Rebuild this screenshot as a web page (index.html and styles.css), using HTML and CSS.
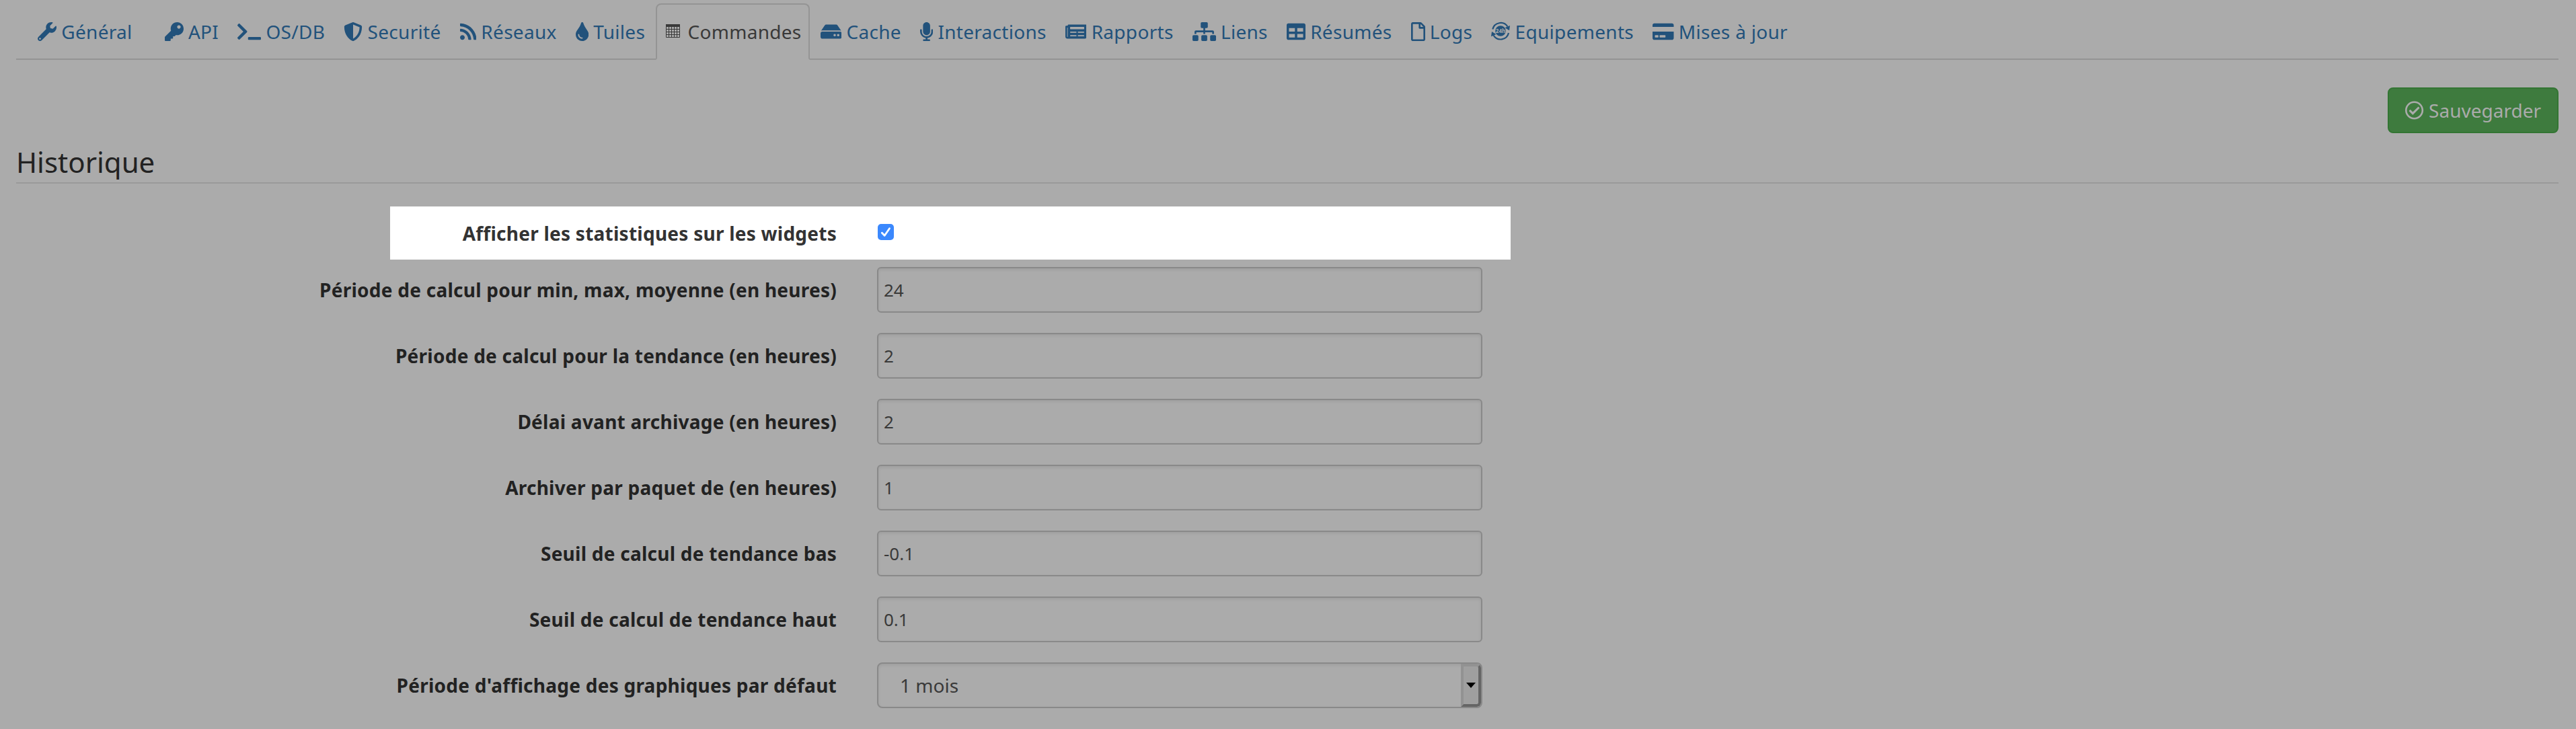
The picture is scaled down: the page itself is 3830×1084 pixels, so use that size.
FILE: index.html
```html
<!DOCTYPE html>
<html lang="fr">
<head>
<meta charset="utf-8">
<title>Configuration</title>
<link rel="stylesheet" href="styles.css">
</head>
<body>
<nav class="tabs">
  <a class="tab tab-first"><svg class="icon" viewBox="0 0 512 512"><path d="M507.73 109.1c-2.24-9.03-13.54-12.09-20.12-5.51l-74.36 74.36-67.88-11.31-11.31-67.88 74.36-74.36c6.62-6.62 3.43-17.9-5.66-20.16-47.38-11.74-99.55.91-136.58 37.93-39.64 39.64-50.55 97.1-34.05 147.2L18.74 402.76c-24.99 24.99-24.99 65.51 0 90.5 24.99 24.99 65.51 24.99 90.5 0l213.21-213.21c50.12 16.71 107.47 5.68 147.37-34.22 37.07-37.07 49.7-89.32 37.91-136.73zM64 472c-13.25 0-24-10.75-24-24 0-13.26 10.75-24 24-24s24 10.74 24 24c0 13.25-10.75 24-24 24z"/></svg>Général</a>
  <a class="tab"><svg class="icon" viewBox="0 0 512 512"><path d="M512 176.001C512 273.203 433.202 352 336 352c-11.22 0-22.19-1.062-32.827-3.069l-24.012 27.014A23.999 23.999 0 0 1 261.223 384H224v40c0 13.255-10.745 24-24 24h-40v40c0 13.255-10.745 24-24 24H24c-13.255 0-24-10.745-24-24v-78.059c0-6.365 2.529-12.47 7.029-16.971l161.802-161.802C163.108 213.814 160 195.271 160 176 160 78.798 238.797.001 335.999 0 433.488-.001 512 78.511 512 176.001zM336 128c0 26.51 21.49 48 48 48s48-21.49 48-48-21.49-48-48-48-48 21.49-48 48z"/></svg>API</a>
  <a class="tab"><svg class="icon" viewBox="0 0 640 512"><path d="M257.981 272.971L63.638 467.314c-9.373 9.373-24.569 9.373-33.941 0L7.029 444.647c-9.357-9.357-9.375-24.522-.04-33.901L161.011 256 6.99 101.255c-9.335-9.379-9.317-24.544.04-33.901l22.667-22.667c9.373-9.373 24.569-9.373 33.941 0L257.981 239.03c9.373 9.372 9.373 24.568 0 33.941zM640 456v-32c0-13.255-10.745-24-24-24H312c-13.255 0-24 10.745-24 24v32c0 13.255 10.745 24 24 24h304c13.255 0 24-10.745 24-24z"/></svg>OS/DB</a>
  <a class="tab"><svg class="icon" viewBox="0 0 512 512"><path d="M466.5 83.7l-192-80a48.15 48.15 0 0 0-36.9 0l-192 80C27.7 91.1 16 108.6 16 128c0 198.5 114.5 335.7 221.5 380.3 11.8 4.9 25.1 4.9 36.9 0C360.1 472.6 496 349.3 496 128c0-19.4-11.7-36.9-29.5-44.3zM256.1 446.3l-.1-381 175.9 73.3c-3.3 151.4-82.1 261.1-175.8 307.7z"/></svg>Securité</a>
  <a class="tab"><svg class="icon" viewBox="0 0 448 512"><path d="M128.081 415.959c0 35.369-28.672 64.041-64.041 64.041S0 451.328 0 415.959s28.672-64.041 64.041-64.041 64.04 28.673 64.04 64.041zm175.66 47.25c-8.354-154.6-132.185-278.587-286.95-286.95C7.656 175.765 0 183.105 0 192.253v48.069c0 8.415 6.49 15.472 14.887 16.018 111.832 7.284 201.473 96.702 208.772 208.772.547 8.397 7.604 14.887 16.018 14.887h48.069c9.149.001 16.489-7.655 15.995-16.79zm144.249.288C439.596 229.677 251.465 40.445 16.503 32.01 7.473 31.686 0 38.981 0 48.016v48.068c0 8.625 6.835 15.645 15.453 15.999 191.179 7.839 344.627 161.316 352.465 352.465.353 8.618 7.373 15.453 15.999 15.453h48.068c9.034-.001 16.329-7.474 16.005-16.504z"/></svg>Réseaux</a>
  <a class="tab"><svg class="icon" viewBox="0 0 352 512"><path d="M205.22 22.09c-7.94-28.78-49.44-30.12-58.44 0C100.01 179.85 0 222.72 0 333.91 0 432.35 78.72 512 176 512s176-79.65 176-178.09c0-111.75-99.79-153.34-146.78-311.82zM176 448c-61.75 0-112-50.25-112-112 0-8.84 7.16-16 16-16s16 7.16 16 16c0 44.11 35.89 80 80 80 8.84 0 16 7.16 16 16s-7.16 16-16 16z"/></svg>Tuiles</a>
  <a class="tab tab-active"><svg class="icon icon-grid" viewBox="0 0 28 28"><path d="M3 3h21v4H3z"/><path fill="none" stroke="currentColor" d="M3.5 7v15.500h20V7M7.500 7v15M11.500 7v15M15.500 7v15M19.500 7v15M3 10.500h21M3 14.500h21M3 18.500h21"/></svg>Commandes</a>
  <a class="tab"><svg class="icon" viewBox="0 0 576 512"><path d="M576 304v96c0 26.51-21.49 48-48 48H48c-26.51 0-48-21.49-48-48v-96c0-26.51 21.49-48 48-48h480c26.51 0 48 21.49 48 48zm-48-80a79.557 79.557 0 0 1 30.777 6.165L462.25 85.374A48.003 48.003 0 0 0 422.311 64H153.689a48 48 0 0 0-39.938 21.374L17.223 230.165A79.557 79.557 0 0 1 48 224h480zm-48 96c-17.673 0-32 14.327-32 32s14.327 32 32 32 32-14.327 32-32-14.327-32-32-32zm-96 0c-17.673 0-32 14.327-32 32s14.327 32 32 32 32-14.327 32-32-14.327-32-32-32z"/></svg>Cache</a>
  <a class="tab"><svg class="icon" viewBox="0 0 352 512"><path d="M176 352c53.02 0 96-42.98 96-96V96c0-53.02-42.98-96-96-96S80 42.98 80 96v160c0 53.02 42.98 96 96 96zm160-160h-16c-8.84 0-16 7.16-16 16v48c0 74.8-64.49 134.82-140.79 127.38C96.71 376.89 48 317.11 48 250.3V208c0-8.84-7.16-16-16-16H16c-8.84 0-16 7.16-16 16v40.16c0 89.64 63.97 169.55 152 181.69V464H96c-8.84 0-16 7.16-16 16v16c0 8.84 7.16 16 16 16h160c8.84 0 16-7.16 16-16v-16c0-8.84-7.16-16-16-16h-56v-33.77C285.71 418.47 352 344.9 352 256v-48c0-8.84-7.16-16-16-16z"/></svg>Interactions</a>
  <a class="tab"><svg class="icon" viewBox="0 0 576 512"><path d="M552 64H88c-13.255 0-24 10.745-24 24v8H24c-13.255 0-24 10.745-24 24v272c0 30.928 25.072 56 56 56h472c26.51 0 48-21.490 48-48V88c0-13.255-10.745-24-24-24zM56 400a8 8 0 0 1-8-8V144h16v248a8 8 0 0 1-8 8zm236-16H140c-6.627 0-12-5.373-12-12v-8c0-6.627 5.373-12 12-12h152c6.627 0 12 5.373 12 12v8c0 6.627-5.373 12-12 12zm208 0H348c-6.627 0-12-5.373-12-12v-8c0-6.627 5.373-12 12-12h152c6.627 0 12 5.373 12 12v8c0 6.627-5.373 12-12 12zm-208-96H140c-6.627 0-12-5.373-12-12v-8c0-6.627 5.373-12 12-12h152c6.627 0 12 5.373 12 12v8c0 6.627-5.373 12-12 12zm208 0H348c-6.627 0-12-5.373-12-12v-8c0-6.627 5.373-12 12-12h152c6.627 0 12 5.373 12 12v8c0 6.627-5.373 12-12 12zm0-96H140c-6.627 0-12-5.373-12-12v-40c0-6.627 5.373-12 12-12h360c6.627 0 12 5.373 12 12v40c0 6.627-5.373 12-12 12z"/></svg>Rapports</a>
  <a class="tab"><svg class="icon" viewBox="0 0 640 512"><path d="M128 352H32c-17.670 0-32 14.330-32 32v96c0 17.670 14.330 32 32 32h96c17.670 0 32-14.330 32-32v-96c0-17.670-14.330-32-32-32zm-24-80h192v48h48v-48h192v48h48v-57.590c0-21.170-17.230-38.410-38.410-38.410H344v-64h40c17.670 0 32-14.330 32-32V32c0-17.670-14.330-32-32-32H256c-17.670 0-32 14.330-32 32v96c0 17.670 14.330 32 32 32h40v64H94.410C73.230 224 56 241.230 56 262.410V320h48v-48zm264 80h-96c-17.670 0-32 14.330-32 32v96c0 17.670 14.330 32 32 32h96c17.670 0 32-14.330 32-32v-96c0-17.670-14.330-32-32-32zm240 0h-96c-17.670 0-32 14.330-32 32v96c0 17.670 14.330 32 32 32h96c17.670 0 32-14.330 32-32v-96c0-17.670-14.330-32-32-32z"/></svg>Liens</a>
  <a class="tab"><svg class="icon" viewBox="0 0 512 512"><path d="M464 32H48C21.490 32 0 53.490 0 80v352c0 26.510 21.490 48 48 48h416c26.510 0 48-21.490 48-48V80c0-26.510-21.490-48-48-48zM224 416H64v-96h160v96zm0-160H64v-96h160v96zm224 160H288v-96h160v96zm0-160H288v-96h160v96z"/></svg>Résumés</a>
  <a class="tab"><svg class="icon" viewBox="0 0 384 512"><path d="M369.9 97.900L286 14C277 5 264.800-.1 252.100-.1H48C21.500 0 0 21.500 0 48v416c0 26.500 21.500 48 48 48h288c26.500 0 48-21.500 48-48V131.900c0-12.700-5.100-25-14.100-34zM332.100 128H256V51.900l76.100 76.100zM48 464V48h160v104c0 13.300 10.700 24 24 24h104v288H48z"/></svg>Logs</a>
  <a class="tab"><svg class="icon icon-day" viewBox="0 0 28 28"><g fill="none" stroke="currentColor" stroke-width="2.200"><path d="M2.300 11.500A12.300 12.300 0 0 1 24.500 7.500"/><path d="M26 17A12.300 12.300 0 0 1 3.500 20.500"/></g><path d="M28 6l-1 7.200-6.500-4zM0 22.300l1-7.200 6.500 4z"/><circle cx="14" cy="14" r="7.800"/><text class="day-text" x="14" y="17">24h</text></svg>Equipements</a>
  <a class="tab"><svg class="icon" viewBox="0 0 576 512"><path d="M0 432c0 26.500 21.500 48 48 48h480c26.500 0 48-21.500 48-48V256H0v176zm192-68c0-6.600 5.400-12 12-12h136c6.600 0 12 5.400 12 12v40c0 6.600-5.400 12-12 12H204c-6.600 0-12-5.400-12-12v-40zm-128 0c0-6.600 5.400-12 12-12h72c6.600 0 12 5.400 12 12v40c0 6.600-5.400 12-12 12H76c-6.600 0-12-5.400-12-12v-40zM576 80v48H0V80c0-26.500 21.500-48 48-48h480c26.500 0 48 21.500 48 48z"/></svg>Mises à jour</a>
</nav>
<div class="actions">
  <button class="save"><svg class="icon" viewBox="8 0 504 512"><path d="M256 8C119.033 8 8 119.033 8 256s111.033 248 248 248 248-111.033 248-248S392.967 8 256 8zm0 48c110.532 0 200 89.451 200 200 0 110.532-89.451 200-200 200-110.532 0-200-89.451-200-200 0-110.532 89.451-200 200-200m140.204 130.267l-22.536-22.718c-4.667-4.705-12.265-4.736-16.970-.068L215.346 303.697l-59.792-60.277c-4.667-4.705-12.265-4.736-16.970-.069l-22.719 22.536c-4.705 4.667-4.736 12.265-.068 16.971l90.781 91.516c4.667 4.705 12.265 4.736 16.970.068l172.589-171.204c4.704-4.668 4.734-12.266.067-16.971z"/></svg>Sauvegarder</button>
</div>
<h1 class="legend">Historique</h1>
<form class="form">
  <div class="row row-highlight"><label class="label">Afficher les statistiques sur les widgets</label><span class="check"><svg viewBox="0 0 24 24"><path d="M6.300 13.200L10.200 17.300L17.500 6.700"/></svg></span></div>
  <div class="row"><label class="label">Période de calcul pour min, max, moyenne (en heures)</label><div class="field">24</div></div>
  <div class="row"><label class="label">Période de calcul pour la tendance (en heures)</label><div class="field">2</div></div>
  <div class="row"><label class="label">Délai avant archivage (en heures)</label><div class="field">2</div></div>
  <div class="row"><label class="label">Archiver par paquet de (en heures)</label><div class="field">1</div></div>
  <div class="row"><label class="label">Seuil de calcul de tendance bas</label><div class="field">-0.1</div></div>
  <div class="row"><label class="label">Seuil de calcul de tendance haut</label><div class="field">0.1</div></div>
  <div class="row"><label class="label">Période d'affichage des graphiques par défaut</label><div class="field select">1 mois<span class="arrow"><svg viewBox="0 0 14 8"><path d="M0 0h14L7 8z"/></svg></span></div></div>
</form>
</body>
</html>
```
FILE: styles.css
```css
* { box-sizing: border-box; }
body {
  margin: 0;
  height: 1084px;
  padding: 5px 26px 0 24px;
  overflow: hidden;
  background: #ababab;
  color: #222;
  font: 28px/40px "Noto Sans", sans-serif;
}
.tabs {
  display: flex;
  height: 84px;
  gap: 4px;
  box-shadow: inset 0 -2px #949494;
}
.tab {
  display: flex;
  align-items: center;
  gap: 7.300px;
  height: 84px;
  padding: 0 10px;
  border: 2px solid transparent;
  color: #22527b;
  letter-spacing: .3px;
  white-space: nowrap;
}
.tab-first { padding: 0 30px; }
.tab-active {
  color: #393939;
  background: #ababab;
  border-color: #949494;
  border-bottom-color: #ababab;
  border-radius: 8px 8px 0 0;
}
.icon {
  display: block;
  height: 28px;
  fill: currentColor;
  flex: none;
}
.icon-day { position: relative; top: -1px; }
.day-text {
  font: bold 8px "Noto Sans", sans-serif;
  letter-spacing: 0;
  fill: #ababab;
  text-anchor: middle;
}
.actions {
  display: flex;
  justify-content: flex-end;
  padding-top: 41px;
}
.save {
  display: flex;
  align-items: center;
  gap: 7.300px;
  height: 68px;
  padding: 0 24px 1px;
  border: 2px solid #337533;
  border-radius: 8px;
  background: #3e7b3e;
  color: #ababab;
  font: inherit;
}
.legend {
  margin: 0 0 34px;
  height: 75px;
  padding-top: 13px;
  border-bottom: 2px solid #999;
  font-size: 42px;
  font-weight: 400;
  line-height: 60px;
}
.row {
  display: grid;
  grid-template-columns: 1220px 900px;
  column-gap: 60px;
  height: 68px;
  margin-bottom: 30px;
}
.label {
  padding-top: 14px;
  font-weight: 700;
  letter-spacing: .25px;
  text-align: right;
  white-space: nowrap;
}
.row-highlight {
  grid-template-columns: 664px 24px;
  column-gap: 61px;
  width: 1666px;
  height: 79px;
  margin: 0 0 11px 556px;
  padding-top: 6px;
  background: #fff;
  color: #333;
}
.check {
  width: 24px;
  height: 24px;
  margin-top: 20px;
  border-radius: 5px;
  background: #3b88fd;
}
.check svg {
  display: block;
  fill: none;
  stroke: #fff;
  stroke-width: 2.800;
  stroke-linecap: round;
  stroke-linejoin: round;
}
.field {
  display: flex;
  align-items: center;
  height: 68px;
  padding: 0 8px;
  border: 2px solid #898989;
  border-radius: 6px;
  box-shadow: inset 0 2px 4px rgba(0, 0, 0, .08);
  color: #393939;
  font-size: 26px;
}
.select {
  justify-content: space-between;
  padding: 0 0 0 32px;
  border-radius: 8px;
  font-size: 28px;
  overflow: hidden;
}
.arrow {
  display: flex;
  align-items: center;
  justify-content: center;
  width: 30px;
  height: 64px;
  border: 4px solid;
  border-color: #929292 #656565 #656565 #929292;
  border-radius: 0 6px 6px 0;
  background: #9f9f9f;
}
.arrow svg {
  width: 14px;
  height: 8px;
}
```
